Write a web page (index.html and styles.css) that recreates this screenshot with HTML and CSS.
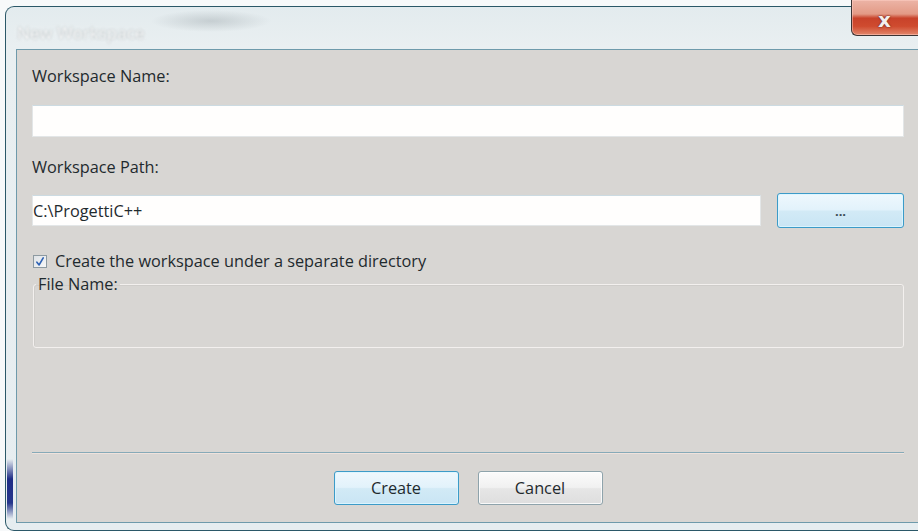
FILE: index.html
```html
<!DOCTYPE html>
<html lang="en">
<head>
<meta charset="utf-8">
<title>New Workspace</title>
<link rel="stylesheet" href="styles.css">
</head>
<body>
<div class="window">
  <div class="titlebar">
    <span class="title">New Workspace</span>
    <button class="close" type="button" aria-label="Close"><span>x</span></button>
  </div>
  <div class="client">
    <div class="form">
      <label class="label" for="ws-name">Workspace Name:</label>
      <input class="field name-field" id="ws-name" type="text" value="">
      <label class="label path-label" for="ws-path">Workspace Path:</label>
      <div class="path-row">
        <input class="field path-field" id="ws-path" type="text" value="C:\ProgettiC++">
        <button class="btn btn-default browse" type="button">...</button>
      </div>
      <div class="check-row">
        <span class="checkbox">
          <svg width="14" height="13" viewBox="0 0 14 13">
            <path d="M4.2 7.2 L6.6 10.2 L11 2.6" fill="none" stroke="#2f62b4" stroke-width="1.8" stroke-linecap="round" stroke-linejoin="round"/>
          </svg>
        </span>
        <span class="check-text">Create the workspace under a separate directory</span>
      </div>
      <fieldset class="group">
        <legend class="group-label">File Name:</legend>
      </fieldset>
    </div>
    <div class="spacer"></div>
    <div class="separator"></div>
    <div class="actions">
      <button class="btn btn-default action" type="button">Create</button>
      <button class="btn action" type="button">Cancel</button>
    </div>
  </div>
</div>
</body>
</html>
```
FILE: styles.css
```css
html, body {
  margin: 0;
  padding: 0;
}

body {
  width: 918px;
  height: 531px;
  overflow: hidden;
  background: #f7f9fa;
  font-family: "Open Sans", "Noto Sans", sans-serif;
  color: #1f2a2e;
}

/* Aero-style window frame */
.window {
  position: relative;
  box-sizing: border-box;
  width: 930px;
  height: 525px;
  margin: 6px 0 0 5px;
  padding: 0 0 7px 10px;
  display: flex;
  flex-direction: column;
  border: 1px solid #2b5868;
  border-right: none;
  border-radius: 9px 0 0 9px;
  background:
    linear-gradient(to bottom, rgba(30, 45, 130, 0) 0, rgba(30, 45, 130, 0) 452px, #1f2d86 472px, #26378c 496px, rgba(30, 45, 130, 0) 512px) 1px 0 / 6px 100% no-repeat,
    radial-gradient(ellipse 60px 11px at 205px 14px, rgba(140, 150, 155, 0.35), rgba(140, 150, 155, 0)),
    linear-gradient(to bottom, #e3ebee 0, #e9eff1 40px, #e6edf0 100%);
}

.titlebar {
  height: 42px;
  flex: none;
  display: flex;
  align-items: center;
}

.title {
  margin: 8px 0 0 1px;
  font-family: "Open Sans", sans-serif;
  font-size: 17px;
  color: #ffffff;
  filter: blur(0.8px);
  text-shadow: 0 0 2px rgba(80, 95, 100, 0.75), 0 0 6px rgba(255, 255, 255, 0.9);
}

.close {
  position: absolute;
  top: -7px;
  right: 14px;
  width: 70px;
  height: 36px;
  padding: 0;
  border: 1px solid #3b3434;
  border-top: none;
  border-right: none;
  border-radius: 0 0 0 6px;
  background: linear-gradient(to bottom, #ecb4a6 0, #e39a86 40%, #c8422a 52%, #cf4b2f 75%, #e2876c 100%);
  box-shadow: inset 0 0 0 1px rgba(255, 210, 200, 0.5);
  display: flex;
  align-items: center;
  justify-content: center;
}

.close span {
  margin: 4px 4px 0 0;
  font-family: "DejaVu Sans", sans-serif;
  font-weight: bold;
  font-size: 20px;
  line-height: 1;
  color: #f4eeec;
  text-shadow: 0 0 2px #6a2a20, 0 0 1px #6a2a20;
}

/* Dialog client area */
.client {
  flex: 1;
  display: flex;
  flex-direction: column;
  border: 1px solid #6e9aab;
  background: #d8d6d3;
  padding: 16px 0 17px 15px;
}

.form {
  width: 872px;
  display: flex;
  flex-direction: column;
}

.label {
  font-size: 16.3px;
  line-height: 20px;
  height: 20px;
}

.field {
  box-sizing: border-box;
  height: 32px;
  margin: 0;
  padding: 0 8px 0 0;
  border: 1px solid #e3e6e7;
  border-top-color: #ccdbe2;
  background: #fffefd;
  font-family: "Open Sans", sans-serif;
  font-size: 16.3px;
  color: #1f2a2e;
  outline: none;
}

.name-field {
  width: 872px;
  margin-top: 19px;
}

.path-label {
  margin-top: 20px;
}

.path-row {
  margin-top: 16px;
  height: 35px;
  display: flex;
  align-items: center;
  gap: 16px;
}

.path-field {
  width: 729px;
  height: 31px;
  padding-left: 0;
}

.btn {
  box-sizing: border-box;
  margin: 0;
  padding: 0;
  border: 1px solid #8ea3ab;
  border-radius: 3px;
  background: linear-gradient(to bottom, #fbfbfb 0, #f1f1f1 48%, #e6e6e6 52%, #dedede 100%);
  box-shadow: inset 0 0 0 1px rgba(255, 255, 255, 0.8);
  font-family: "Open Sans", sans-serif;
  font-size: 16.3px;
  color: #1f2a2e;
}

.btn-default {
  border-color: #3c9bc8;
  background: linear-gradient(to bottom, #eef8fd 0, #e2f2fb 48%, #d2eaf6 52%, #c9e5f4 100%);
  box-shadow: inset 0 0 0 1px rgba(220, 245, 255, 0.9);
}

.browse {
  width: 127px;
  height: 35px;
  font-size: 13px;
  font-weight: bold;
  line-height: 1;
  padding-top: 2px;
  color: #3a4a52;
}

.check-row {
  margin-top: 23px;
  height: 20px;
  display: flex;
  align-items: center;
  gap: 8px;
}

.checkbox {
  box-sizing: border-box;
  width: 14px;
  height: 13px;
  margin-left: 1px;
  border: 1px solid #8d9aa1;
  background: linear-gradient(135deg, #dfe3e6 0, #f6f7f8 100%);
  display: flex;
}

.checkbox svg {
  margin: -1px 0 0 -1px;
}

.check-text {
  font-size: 16.3px;
  line-height: 20px;
}

.group {
  box-sizing: border-box;
  height: 74px;
  margin: 3px 0 0 1px;
  width: 871px;
  padding: 0;
  border: 1px solid #f3f0ee;
  border-radius: 3px;
  box-shadow: inset 1px 1px 0 #cfcdca;
}

.group-label {
  margin-left: 2px;
  padding: 0 2px;
  font-size: 16.3px;
  line-height: 20px;
}

.spacer {
  flex: 1;
}

.separator {
  width: 872px;
  height: 0;
  border-top: 1px solid #86aab8;
  border-bottom: 1px solid #efe2dc;
}

.actions {
  margin-top: 17px;
  width: 872px;
  display: flex;
  justify-content: center;
  gap: 19px;
}

.action {
  width: 125px;
  height: 34px;
}
```
